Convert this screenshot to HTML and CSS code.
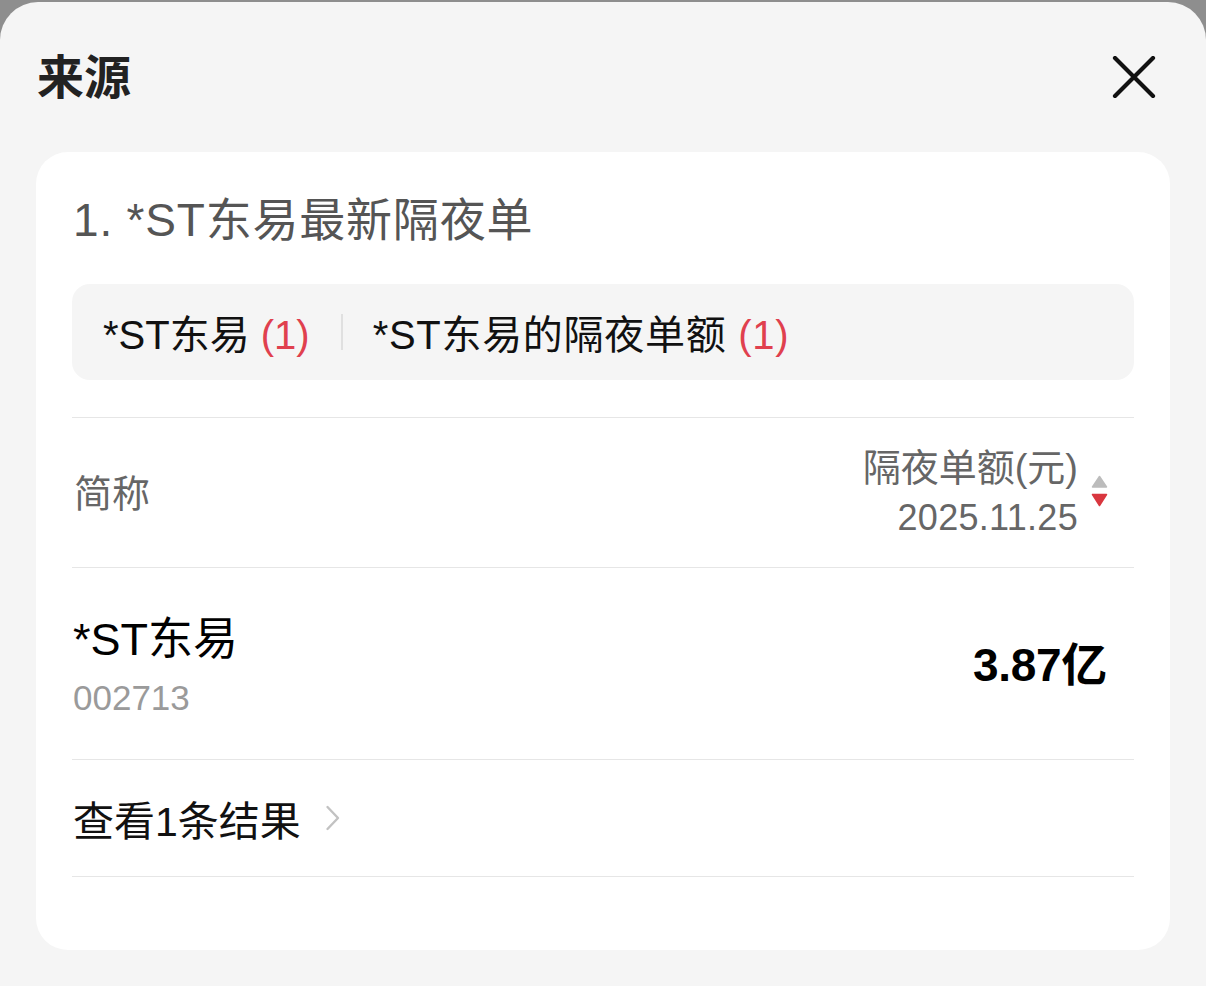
FILE: index.html
```html
<!DOCTYPE html>
<html lang="zh">
<head>
<meta charset="utf-8">
<link rel="stylesheet" href="styles.css">
</head>
<body>
<div class="sheet">
  <div class="head">
    <div class="title">来源</div>
    <svg class="close" width="44" height="42" viewBox="0 0 44 42"><path d="M3 2 L41 40 M41 2 L3 40" stroke="#111" stroke-width="4.2" stroke-linecap="round"/></svg>
  </div>
  <div class="card">
    <div class="sec-title">1. *ST东易最新隔夜单</div>
    <div class="tags">
      <span class="tag">*ST东易 <span class="cnt">(1)</span></span>
      <span class="sep"></span>
      <span class="tag tag-wide">*ST东易的隔夜单额 <span class="cnt">(1)</span></span>
    </div>
    <div class="hline"></div>
    <div class="thead">
      <div class="th-name">简称</div>
      <div class="th-right">
        <div class="th-col">
          <div class="th-main">隔夜单额(元)</div>
          <div class="th-date">2025.11.25</div>
        </div>
        <div class="sort">
          <svg width="17" height="33" viewBox="0 0 17 33"><path d="M8.5 1.5 L15.5 12 L1.5 12 Z" fill="#bcbcbc" stroke="#bcbcbc" stroke-width="1.5" stroke-linejoin="round"/><path d="M1.5 19.5 L15.5 19.5 L8.5 30.5 Z" fill="#d9373f" stroke="#d9373f" stroke-width="1.5" stroke-linejoin="round"/></svg>
        </div>
      </div>
    </div>
    <div class="hline"></div>
    <div class="trow">
      <div class="stock">
        <div class="s-name">*ST东易</div>
        <div class="s-code">002713</div>
      </div>
      <div class="s-val">3.87亿</div>
    </div>
    <div class="hline"></div>
    <div class="more">
      <span>查看1条结果</span>
      <svg class="chev" width="16" height="26" viewBox="0 0 16 26"><path d="M2.5 2 L13 13 L2.5 24" fill="none" stroke="#c2c2c2" stroke-width="2.4" stroke-linecap="round" stroke-linejoin="round"/></svg>
    </div>
    <div class="hline"></div>
  </div>
</div>
</body>
</html>
```
FILE: styles.css
```css
html, body {
  margin: 0;
  padding: 0;
}
body {
  background: #8e8e8e;
  font-family: "Liberation Sans", "Noto Sans CJK SC", sans-serif;
  width: 1206px;
  height: 986px;
  overflow: hidden;
}
.sheet {
  margin-top: 2px;
  height: 984px;
  box-sizing: border-box;
  background: #f5f5f5;
  border-radius: 38px 38px 0 0;
  padding: 0 36px;
}
.head {
  height: 150px;
  display: flex;
  align-items: center;
  justify-content: space-between;
}
.title {
  font-size: 47px;
  font-weight: 700;
  color: #222;
  padding-left: 1px;
  line-height: 50px;
  margin-top: 2px;
}
.close {
  margin-right: 14px;
  display: block;
}
.card {
  background: #fff;
  border-radius: 32px;
  height: 798px;
  box-sizing: border-box;
  padding: 43px 36px 0;
}
.sec-title {
  font-size: 46px;
  line-height: 50px;
  color: #555;
  padding-left: 1px;
  letter-spacing: 0.8px;
}
.tags {
  margin-top: 39px;
  height: 96px;
  background: #f5f5f5;
  border-radius: 18px;
  display: flex;
  align-items: center;
  padding-left: 31px;
}
.tag {
  font-size: 40px;
  color: #111;
  white-space: nowrap;
}
.tag-wide {
  letter-spacing: 0.7px;
}
.cnt {
  color: #e0404e;
}
.sep {
  width: 2px;
  height: 36px;
  background: #e0e0e0;
  margin: 0 30px 0 31px;
}
.hline {
  height: 1px;
  background: #e6e6e6;
}
.tags + .hline {
  margin-top: 37px;
}
.thead {
  height: 149px;
  display: flex;
  align-items: center;
  justify-content: space-between;
}
.th-name {
  font-size: 38px;
  color: #666;
  padding-left: 2px;
  margin-top: -5px;
}
.th-right {
  display: flex;
  align-items: center;
  padding-right: 26px;
}
.th-col {
  display: flex;
  flex-direction: column;
  align-items: flex-end;
}
.th-main {
  font-size: 38px;
  line-height: 50px;
  color: #666;
}
.th-date {
  font-size: 36px;
  line-height: 50px;
  color: #666;
  letter-spacing: 0.3px;
}
.sort {
  margin-left: 13px;
  display: flex;
  margin-top: -2px;
}
.sort svg { display: block; }
.trow {
  height: 191px;
  display: flex;
  align-items: center;
  justify-content: space-between;
}
.stock {
  display: flex;
  flex-direction: column;
  padding-left: 1px;
  margin-top: 6px;
}
.s-name {
  font-size: 45px;
  line-height: 54px;
  color: #000;
}
.s-code {
  font-size: 35px;
  line-height: 44px;
  color: #9a9a9a;
  margin-top: 9px;
}
.s-val {
  font-size: 46px;
  font-weight: 700;
  color: #000;
  padding-right: 27px;
  margin-top: -6px;
  letter-spacing: -0.3px;
}
.more {
  height: 116px;
  display: flex;
  align-items: center;
  font-size: 41px;
  color: #111;
  padding-left: 1px;
}
.chev {
  margin-left: 24px;
  display: block;
}
```
